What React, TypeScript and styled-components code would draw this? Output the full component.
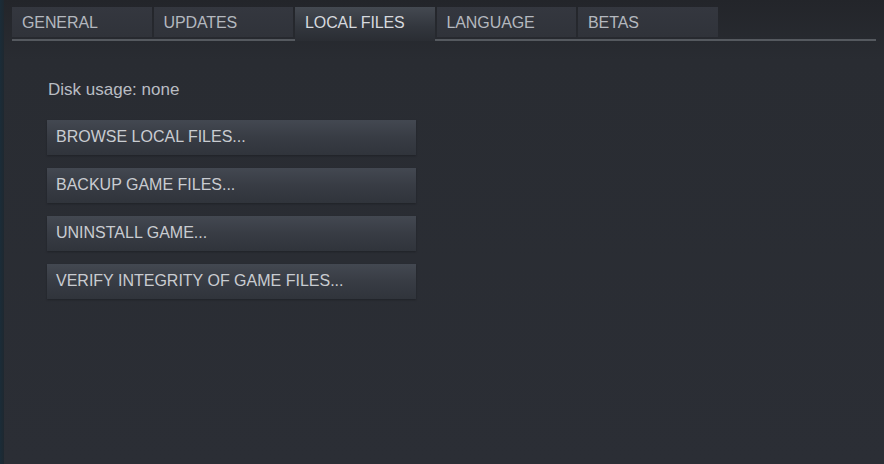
import styled, { createGlobalStyle } from 'styled-components';

const tabs = ['GENERAL', 'UPDATES', 'LOCAL FILES', 'LANGUAGE', 'BETAS'];
const actions = [
  'BROWSE LOCAL FILES...',
  'BACKUP GAME FILES...',
  'UNINSTALL GAME...',
  'VERIFY INTEGRITY OF GAME FILES...',
];

const GlobalStyle = createGlobalStyle`
  html, body {
    margin: 0;
    padding: 0;
    background: #2a2d33;
  }
  body {
    font-family: 'Liberation Sans', Arial, sans-serif;
  }
`;

const App = () => {
  return (
    <>
      <GlobalStyle />
      <Window>
        <EdgeStrip />
        <Panel>
          <TabBar>
            {tabs.map((t) => (
              <Tab key={t} active={t === 'LOCAL FILES'}>
                {t}
              </Tab>
            ))}
          </TabBar>
          <Content>
            <DiskUsage>Disk usage: none</DiskUsage>
            <ButtonList>
              {actions.map((a) => (
                <ActionButton key={a}>{a}</ActionButton>
              ))}
            </ButtonList>
          </Content>
        </Panel>
      </Window>
    </>
  );
};

const Window = styled.div`
  display: flex;
  width: 884px;
  height: 464px;
  overflow: hidden;
  background: linear-gradient(180deg, #23252a 0px, #292c32 60px, #2b2e35 100%);
`;

const EdgeStrip = styled.div`
  width: 4px;
  flex-shrink: 0;
  background: linear-gradient(90deg, #1b2c38, #1e2830);
`;

const Panel = styled.div`
  flex: 1;
  display: flex;
  flex-direction: column;
  padding: 7px 8px 0 8px;
`;

const TabBar = styled.div`
  display: flex;
  gap: 2px;
  height: 32px;
  border-bottom: 2px solid #55595f;
`;

const Tab = styled.div<{ active?: boolean }>`
  width: 139.5px;
  box-sizing: border-box;
  padding: 7px 0 0 10px;
  font-size: 16px;
  letter-spacing: -0.1px;
  color: ${(p) => (p.active ? '#d6d9de' : '#b4b8bf')};
  background: ${(p) =>
    p.active
      ? 'linear-gradient(180deg, #444951 0%, #32363d 60%, #2a2d33 100%)'
      : 'linear-gradient(180deg, #34373f 0%, #30333a 100%)'};
  height: ${(p) => (p.active ? '34px' : '30px')};
  position: relative;
  z-index: ${(p) => (p.active ? 1 : 0)};
`;

const Content = styled.div`
  padding: 39px 0 0 36px;
`;

const DiskUsage = styled.div`
  font-size: 17px;
  color: #b9bdc3;
  line-height: 20px;
`;

const ButtonList = styled.div`
  display: flex;
  flex-direction: column;
  gap: 13px;
  margin-top: 20px;
  margin-left: -1px;
`;

const ActionButton = styled.div`
  width: 369px;
  height: 35px;
  box-sizing: border-box;
  padding: 8px 0 0 9px;
  font-size: 16px;
  color: #c9ccd1;
  background: linear-gradient(180deg, #434851 0%, #383c44 50%, #30343b 100%);
  box-shadow: 0 1px 2px rgba(0, 0, 0, 0.25);
`;

export default App;
